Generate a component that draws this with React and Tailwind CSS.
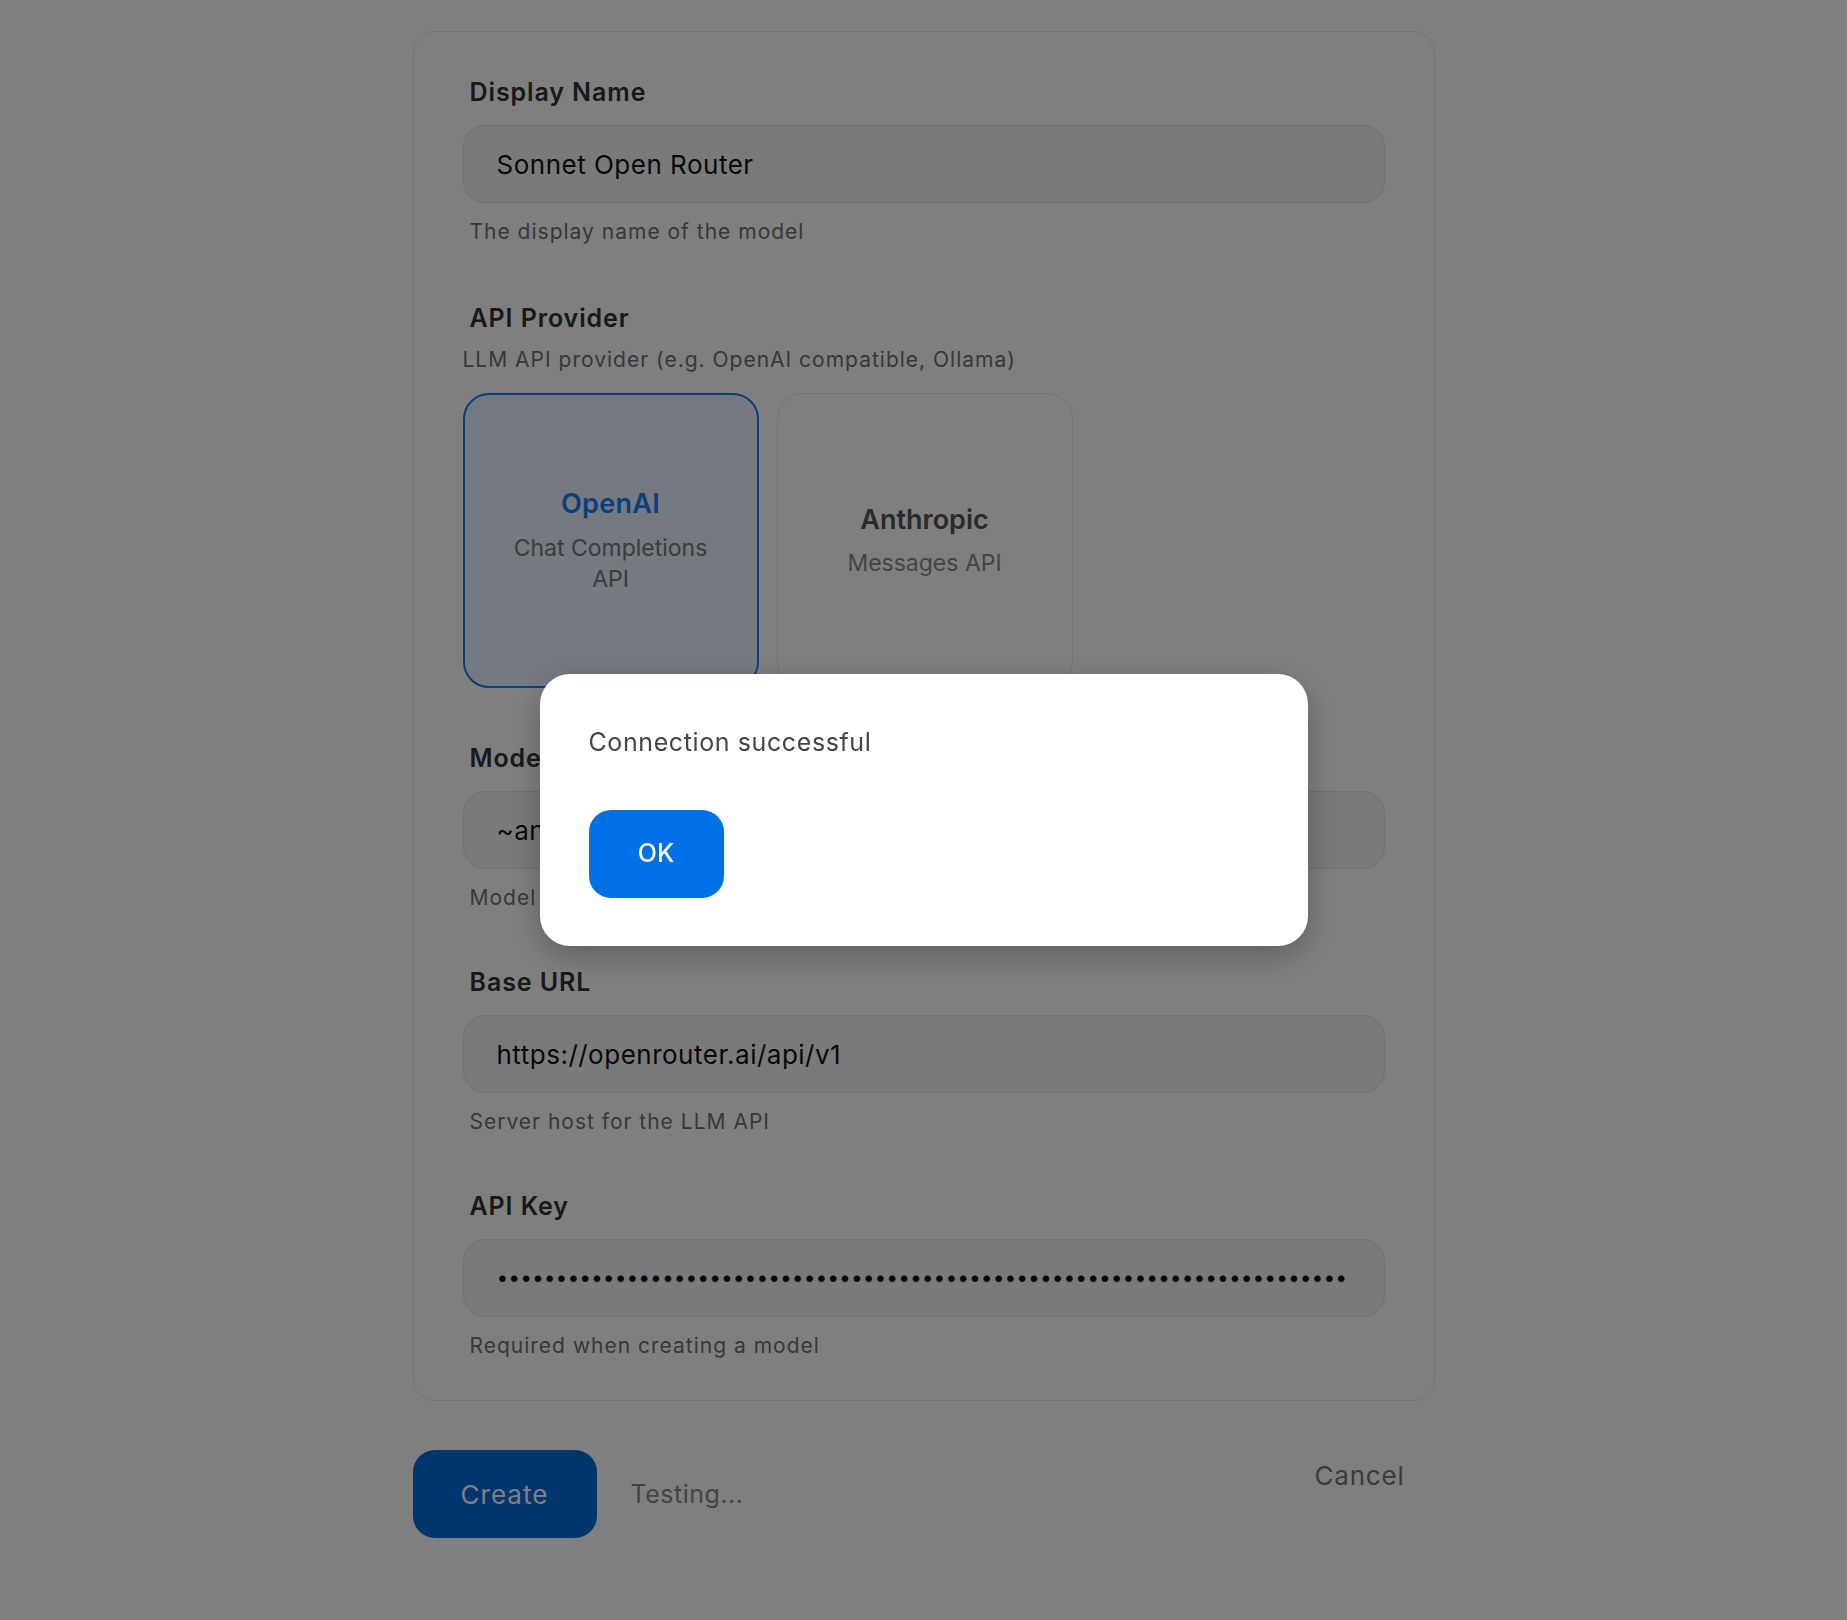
import React from "react";

function Label({ children, className = "" }) {
  return (
    <div className={"h-[32px] pl-[7px] text-[25px] leading-[32px] tracking-[0.9px] font-semibold text-[#333] " + className}>
      {children}
    </div>
  );
}

function Helper({ children, className = "" }) {
  return (
    <div className={"h-[28px] pl-[7px] text-[21px] leading-[28px] tracking-[1px] text-[#707070] " + className}>
      {children}
    </div>
  );
}

function Input({ children, className = "" }) {
  return (
    <div
      className={
        "h-[78px] rounded-[22px] border border-[#e2e2e2] bg-[#f4f4f4] px-[33px] flex items-center text-[26px] tracking-[0.5px] text-[#111] " +
        className
      }
    >
      {children}
    </div>
  );
}

const DOTS = "•".repeat(72);

export default function App() {
  return (
    <div className="relative min-h-[1620px] bg-white font-['Inter',sans-serif]">
      <div className="mx-auto w-[1022px] pt-[31px]">
        <div className="rounded-[22px] border border-[#e8e8e8] px-[49px] pt-[44px] pb-[40px]">
          <Label>Display Name</Label>
          <Input className="mt-[17px]">Sonnet Open Router</Input>
          <Helper className="mt-[15px]">The display name of the model</Helper>

          <Label className="mt-[56px]">API Provider</Label>
          <Helper className="mt-[12px] !pl-0">LLM API provider (e.g. OpenAI compatible, Ollama)</Helper>
          <div className="mt-[19px] flex gap-[18px]">
            <div className="h-[295px] w-[296px] rounded-[26px] border-2 border-[#157eff] bg-[#e9f4ff] flex flex-col items-center justify-center text-center">
              <div className="text-[27px] leading-[34px] tracking-[0.3px] font-semibold text-[#157eff]">OpenAI</div>
              <div className="mt-[12px] w-[230px] text-[23px] leading-[31px] text-[#787878]">Chat Completions API</div>
            </div>
            <div className="h-[295px] w-[296px] rounded-[26px] border border-[#e6e6e6] bg-white flex flex-col items-center justify-center text-center">
              <div className="text-[27px] leading-[34px] font-semibold text-[#555]">Anthropic</div>
              <div className="mt-[11px] text-[23px] leading-[31px] text-[#888]">Messages API</div>
            </div>
          </div>

          <Label className="mt-[54px]">Model</Label>
          <Input className="mt-[17px]">~anthropic/claude-3.5-sonnet</Input>
          <Helper className="mt-[15px]">Model identifier used by the provider</Helper>

          <Label className="mt-[54px]">Base URL</Label>
          <Input className="mt-[17px]">https://openrouter.ai/api/v1</Input>
          <Helper className="mt-[15px]">Server host for the LLM API</Helper>

          <Label className="mt-[54px]">API Key</Label>
          <Input className="mt-[17px]">
            <span className="whitespace-nowrap text-[21px] tracking-[0px]">{DOTS}</span>
          </Input>
          <Helper className="mt-[15px]">Required when creating a model</Helper>
        </div>

        <div className="mt-[49px] flex items-start justify-between">
          <div className="flex items-center gap-[34px]">
            <button className="h-[88px] w-[184px] rounded-[22px] bg-[#006adc] text-[26px] tracking-[1px] text-white">Create</button>
            <span className="pt-[2px] text-[25px] tracking-[0.5px] text-[#888]">Testing...</span>
          </div>
          <button className="mr-[30px] mt-[10px] text-[26px] leading-[32px] tracking-[0.8px] text-[#777]">Cancel</button>
        </div>
      </div>

      <div className="fixed inset-0 bg-black/50 flex items-center justify-center">
        <div className="w-[768px] h-[272px] rounded-[30px] bg-white shadow-[0_10px_30px_rgba(0,0,0,0.25)] px-[49px] pt-[52px]">
          <div className="text-[25px] leading-[32px] tracking-[0.6px] text-[#444]">Connection successful</div>
          <button className="mt-[52px] h-[88px] w-[135px] rounded-[22px] bg-[#0070e6] text-[25px] font-medium text-white">OK</button>
        </div>
      </div>
    </div>
  );
}
